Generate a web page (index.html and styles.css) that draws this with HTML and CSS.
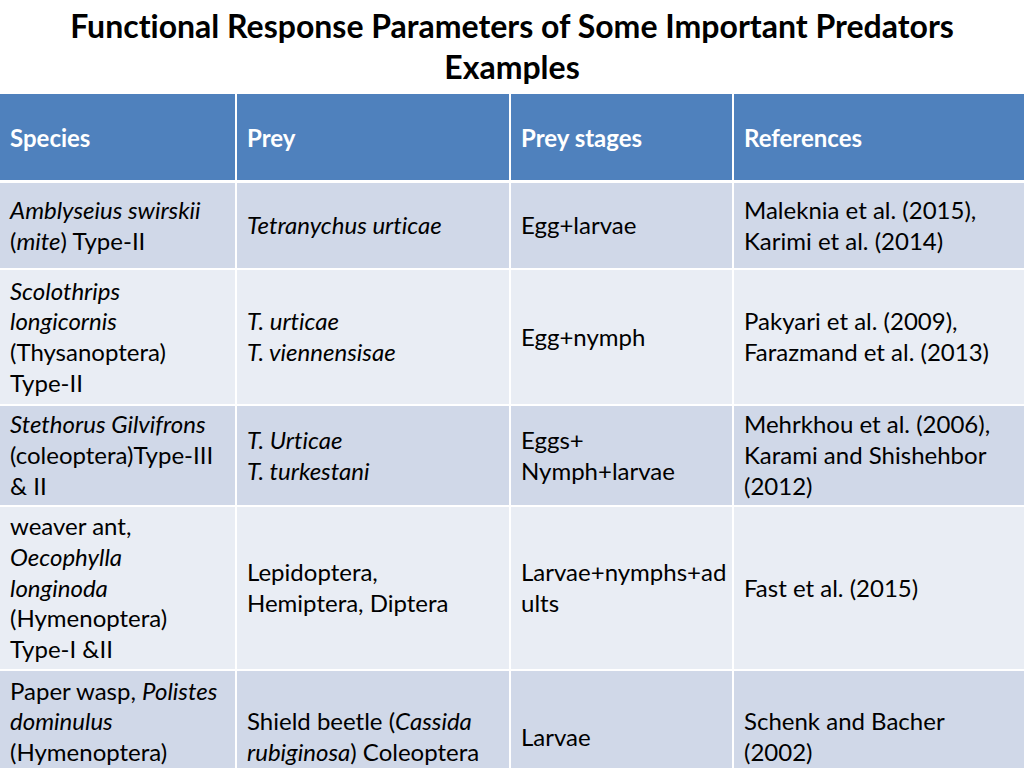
FILE: index.html
```html
<!DOCTYPE html>
<html lang="en">
<head>
<meta charset="utf-8">
<title>Functional Response Parameters</title>
<link rel="stylesheet" href="styles.css">
</head>
<body>
<div class="slide">
  <h1 class="title">Functional Response Parameters of Some Important Predators<br>Examples</h1>
  <div class="table">
    <div class="cell head">Species</div>
    <div class="cell head">Prey</div>
    <div class="cell head">Prey stages</div>
    <div class="cell head">References</div>

    <div class="cell dark"><span><i>Amblyseius swirskii</i><br>(<i>mite</i>) Type-II</span></div>
    <div class="cell dark"><span><i>Tetranychus urticae</i></span></div>
    <div class="cell dark"><span>Egg+larvae</span></div>
    <div class="cell dark"><span>Maleknia et al. (2015),<br>Karimi et al. (2014)</span></div>

    <div class="cell light"><span><i>Scolothrips</i><br><i>longicornis</i><br>(Thysanoptera)<br>Type-II</span></div>
    <div class="cell light"><span><i>T. urticae</i><br><i>T. viennensisae</i></span></div>
    <div class="cell light"><span>Egg+nymph</span></div>
    <div class="cell light"><span>Pakyari et al. (2009),<br>Farazmand et al. (2013)</span></div>

    <div class="cell dark"><span><i>Stethorus Gilvifrons</i><br>(coleoptera)Type-III<br>&amp; II</span></div>
    <div class="cell dark"><span><i>T. Urticae</i><br><i>T. turkestani</i></span></div>
    <div class="cell dark"><span>Eggs+<br>Nymph+larvae</span></div>
    <div class="cell dark"><span>Mehrkhou et al. (2006),<br>Karami and Shishehbor<br>(2012)</span></div>

    <div class="cell light"><span>weaver ant,<br><i>Oecophylla</i><br><i>longinoda</i><br>(Hymenoptera)<br>Type-I &amp;II</span></div>
    <div class="cell light"><span>Lepidoptera,<br>Hemiptera, Diptera</span></div>
    <div class="cell light"><span>Larvae+nymphs+ad<br>ults</span></div>
    <div class="cell light"><span>Fast et al. (2015)</span></div>

    <div class="cell dark"><span>Paper wasp, <i>Polistes</i><br><i>dominulus</i><br>(Hymenoptera)<br>Type-II</span></div>
    <div class="cell dark"><span>Shield beetle (<i>Cassida</i><br><i>rubiginosa</i>) Coleoptera</span></div>
    <div class="cell dark"><span>Larvae</span></div>
    <div class="cell dark"><span>Schenk and Bacher<br>(2002)</span></div>
  </div>
</div>
</body>
</html>
```

FILE: styles.css
```css
html, body {
  margin: 0;
  padding: 0;
  background: #ffffff;
}

body {
  width: 1024px;
  height: 768px;
  overflow: hidden;
}

.slide {
  width: 1024px;
  height: 768px;
  overflow: hidden;
  font-family: Lato, "Liberation Sans", sans-serif;
  font-variant-ligatures: none;
}

.title {
  margin: 0;
  height: 94px;
  box-sizing: border-box;
  padding-top: 5px;
  font-size: 32px;
  line-height: 41px;
  font-weight: 700;
  text-align: center;
  color: #000000;
}

.table {
  display: grid;
  grid-template-columns: 235px 272px 221px 1fr;
  grid-template-rows: 87px 85px 134px 99px 162px 132px;
  column-gap: 2px;
  row-gap: 2px;
  background: #ffffff;
}

.cell {
  display: flex;
  flex-direction: column;
  justify-content: center;
  padding: 0 4px 0 10px;
  font-size: 24px;
  line-height: 30.7px;
  color: #000000;
  white-space: nowrap;
  overflow: hidden;
}

.head {
  background: #4f81bd;
  color: #ffffff;
  font-weight: 700;
  margin-bottom: 1px;
  padding-top: 3px;
}

.dark {
  background: #d0d8e8;
}

.light {
  background: #e9edf4;
}
```
